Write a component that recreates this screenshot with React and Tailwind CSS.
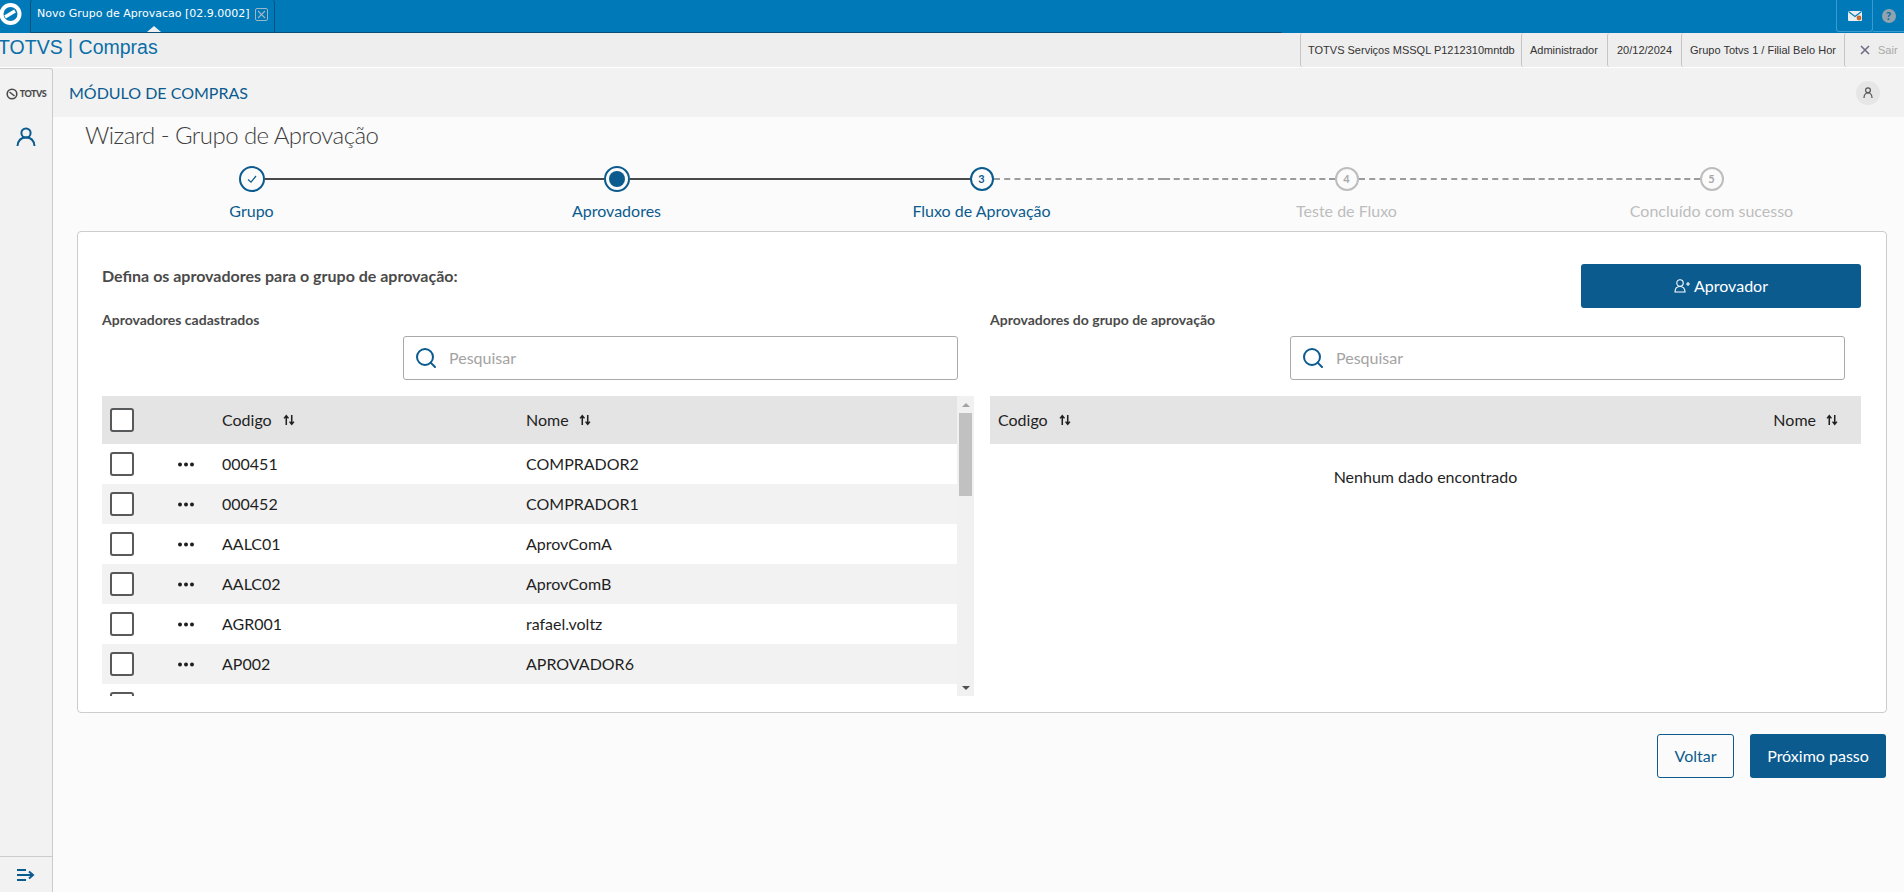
import { Search } from "lucide-react";

const ROWS = [
  ["000451", "COMPRADOR2"],
  ["000452", "COMPRADOR1"],
  ["AALC01", "AprovComA"],
  ["AALC02", "AprovComB"],
  ["AGR001", "rafael.voltz"],
  ["AP002", "APROVADOR6"],
  ["", ""],
];

const STEPS = [
  { label: "Grupo", state: "done", left: "none", right: "solid" },
  { label: "Aprovadores", state: "active", left: "solid", right: "solid" },
  { label: "Fluxo de Aprovação", state: "current", num: 3, left: "solid", right: "dashed" },
  { label: "Teste de Fluxo", state: "todo", num: 4, left: "dashed", right: "dashed" },
  { label: "Concluído com sucesso", state: "todo", num: 5, left: "dashed", right: "none" },
];

function Connector({ kind }) {
  if (kind === "none") return <div className="flex-1" />;
  if (kind === "solid") return <div className="flex-1 h-[2px] bg-[#4a4a4a]" />;
  return <div className="flex-1 border-t-2 border-dashed border-[#9b9b9b]" />;
}

function StepCircle({ step }) {
  if (step.state === "done") {
    return (
      <div className="w-[26px] h-[26px] rounded-full border-2 border-[#0b5b8f] flex items-center justify-center">
        <svg width="12" height="12" viewBox="0 0 12 12" fill="none" stroke="#0b5b8f" strokeWidth="1.2">
          <path d="M2 6.5 L5 9.2 L10 3" />
        </svg>
      </div>
    );
  }
  if (step.state === "active") {
    return (
      <div className="w-[26px] h-[26px] rounded-full border-2 border-[#0b5b8f] flex items-center justify-center">
        <div className="w-[16px] h-[16px] rounded-full bg-[#0b5b8f]" />
      </div>
    );
  }
  const tone = step.state === "current" ? "border-[#0b5b8f] text-[#0b5b8f]" : "border-[#bdbdbd] text-[#a8a8a8]";
  return (
    <div className={`w-[24px] h-[24px] rounded-full border-2 flex items-center justify-center text-[11px] font-bold ${tone}`}>
      {step.num}
    </div>
  );
}

function Stepper() {
  return (
    <div className="flex ml-[16px] mt-[13px] w-[1825px]">
      {STEPS.map((s) => (
        <div key={s.label} className="w-[365px] flex flex-col items-center">
          <div className="w-full h-[26px] flex items-center">
            <Connector kind={s.left} />
            <StepCircle step={s} />
            <Connector kind={s.right} />
          </div>
          <div className={`mt-[7px] mb-[1px] text-base leading-6 ${s.state === "todo" ? "text-[#bdbdbd]" : "text-[#0b5b8f]"}`}>
            {s.label}
          </div>
        </div>
      ))}
    </div>
  );
}

function SortIcon() {
  return (
    <svg width="12" height="12" viewBox="0 0 11 11" fill="none" stroke="#1f1f1f" strokeWidth="1.4">
      <path d="M3 10 V2 M1 4 L3 1.5 L5 4" />
      <path d="M8 1 V9 M6 7 L8 9.5 L10 7" />
    </svg>
  );
}

function Checkbox() {
  return <div className="w-[24px] h-[24px] shrink-0 rounded-[3px] border-2 border-[#58595b] bg-white" />;
}

function Dots() {
  return (
    <svg width="16" height="5" viewBox="0 0 16 5" fill="#1f1f1f">
      <circle cx="2" cy="2.5" r="2" />
      <circle cx="8" cy="2.5" r="2" />
      <circle cx="14" cy="2.5" r="2" />
    </svg>
  );
}

function SearchBox() {
  return (
    <div className="mt-[4px] mr-[16px] ml-auto w-[555px] h-[44px] flex items-center border border-[#a9a9a9] rounded-[3px] bg-white pl-[10px]">
      <Search className="w-[24px] h-[24px] text-[#0b5b8f]" strokeWidth={2} />
      <span className="ml-[11px] text-base text-[#a3a3a3]">Pesquisar</span>
    </div>
  );
}

function Scrollbar() {
  return (
    <div className="w-[17px] shrink-0 flex flex-col items-center bg-[#f1f1f1]">
      <div className="h-[17px] flex items-center justify-center">
        <div className="w-0 h-0 border-x-[4px] border-x-transparent border-b-[4px] border-b-[#a3a3a3]" />
      </div>
      <div className="w-[13px] h-[83px] bg-[#c1c1c1]" />
      <div className="flex-1" />
      <div className="h-[17px] flex items-center justify-center">
        <div className="w-0 h-0 border-x-[4px] border-x-transparent border-t-[4px] border-t-[#505050]" />
      </div>
    </div>
  );
}

function LeftTable() {
  return (
    <div className="mt-[16px] flex h-[300px]">
      <div className="w-[855px] overflow-hidden text-base text-[#1f1f1f]">
        <div className="h-[48px] bg-[#e4e4e4] grid grid-cols-[120px_304px_1fr] items-center">
          <div className="pl-[8px]">
            <Checkbox />
          </div>
          <div className="flex items-center gap-[11px]">
            Codigo <SortIcon />
          </div>
          <div className="flex items-center gap-[10px]">
            Nome <SortIcon />
          </div>
        </div>
        {ROWS.map((r, i) => (
          <div
            key={i}
            className={`h-[40px] grid grid-cols-[76px_44px_304px_1fr] items-center ${i % 2 ? "bg-[#f2f2f2]" : "bg-white"}`}
          >
            <div className="pl-[8px]">
              <Checkbox />
            </div>
            <div className="flex">{r[0] && <Dots />}</div>
            <div>{r[0]}</div>
            <div>{r[1]}</div>
          </div>
        ))}
      </div>
      <Scrollbar />
    </div>
  );
}

function RightTable() {
  return (
    <div className="mt-[16px] text-base text-[#1f1f1f]">
      <div className="h-[48px] bg-[#e4e4e4] flex items-center justify-between px-[8px] pr-[23px]">
        <div className="flex items-center gap-[11px]">
          Codigo <SortIcon />
        </div>
        <div className="flex items-center gap-[10px]">
          Nome <SortIcon />
        </div>
      </div>
      <div className="text-center mt-[21px] leading-6">Nenhum dado encontrado</div>
    </div>
  );
}

export default function App() {
  return (
    <div className="w-[1904px] h-[892px] overflow-hidden flex flex-col bg-[#fbfbfb] font-['Lato',sans-serif]">
      {/* top blue bar */}
      <div className="h-[33px] shrink-0 flex bg-[#0079b8]">
        <div className="w-[30px] shrink-0 flex items-start">
          <svg width="24" height="28" viewBox="0 0 24 28">
            <circle cx="10.5" cy="14" r="9" fill="none" stroke="#fff" strokeWidth="4" />
            <path d="M5 17 L15 11" stroke="#fff" strokeWidth="3.4" />
          </svg>
        </div>
        <div className="relative w-[245px] shrink-0 flex items-center pl-[6px] pb-[3px] border-x border-b border-[#0a4f78] rounded-t-[3px] font-['DejaVu_Sans',sans-serif] text-[11px] text-white">
          Novo Grupo de Aprovacao [02.9.0002]
          <span className="ml-[5px] w-[13px] h-[13px] flex items-center justify-center border border-[#9fb6c4] rounded-[2px]">
            <svg width="9" height="9" viewBox="0 0 9 9" stroke="#9fb6c4" strokeWidth="1.1">
              <path d="M1 1 L8 8 M8 1 L1 8" />
            </svg>
          </span>
          <span className="absolute bottom-0 left-[116px] w-0 h-0 border-x-[7px] border-x-transparent border-b-[6px] border-b-[#efefef]" />
        </div>
        <div className="w-[1007px] border-b border-[#0a4f78]" />
        <div className="flex-1" />
        <div className="w-[37px] mb-[1px] flex items-center justify-center border-x border-b border-[#3b9bd0] rounded-b-[3px]">
          <svg width="14" height="10" viewBox="0 0 14 10">
            <rect width="14" height="10" rx="1" fill="#e8eef2" />
            <path d="M0.5 0.5 L7 5.5 L13.5 0.5" fill="none" stroke="#0079b8" strokeWidth="1.1" />
            <circle cx="11" cy="7" r="2.4" fill="#c9692a" />
          </svg>
        </div>
        <div className="w-[31px] mb-[1px] flex items-center justify-center border-b border-[#3b9bd0]">
          <span className="w-[14px] h-[14px] rounded-full bg-[#93a3ad] flex items-center justify-center text-[#0a6ea6] text-[11px] font-black leading-none">
            ?
          </span>
        </div>
      </div>

      {/* info bar */}
      <div className="h-[34px] shrink-0 flex items-center bg-[#eeeeee] font-['Liberation_Sans',sans-serif] text-[11px] text-[#333333]">
        <div className="w-[1300px] text-[19.5px] leading-none text-[#0b6ea8] ml-[-2px] pb-[4px]">TOTVS | Compras</div>
        <div className="w-[221px] h-full flex items-center pl-[7px] border-l border-[#c4c4c4] rounded-l-[3px] ml-[2px]">
          TOTVS Serviços MSSQL P1212310mntdb
        </div>
        <div className="w-[86px] h-full flex items-center pl-[8px] border-l border-[#c4c4c4] rounded-l-[3px]">
          Administrador
        </div>
        <div className="w-[74px] h-full flex items-center pl-[9px] border-l border-[#c4c4c4] rounded-l-[3px]">
          20/12/2024
        </div>
        <div className="w-[163px] h-full flex items-center pl-[8px] border-l border-[#c4c4c4] rounded-l-[3px] overflow-hidden whitespace-nowrap">
          Grupo Totvs 1 / Filial Belo Hor
        </div>
        <div className="flex-1 h-full flex items-center pl-[15px] border-l border-[#c4c4c4] rounded-l-[3px] text-[#a8a8a8]">
          <svg width="10" height="10" viewBox="0 0 10 10" stroke="#6d6d85" strokeWidth="1.6">
            <path d="M1 1 L9 9 M9 1 L1 9" />
          </svg>
          <span className="ml-[8px]">Sair</span>
        </div>
      </div>
      <div className="h-[1px] shrink-0 bg-white" />

      <div className="flex-1 flex min-h-0">
        {/* sidebar */}
        <div className="w-[53px] shrink-0 flex flex-col bg-[#f2f2f2] border-r border-t border-[#cccccc] rounded-tr-[3px]">
          <div className="h-[48px] flex items-center justify-center gap-[2px] pt-[1px]">
            <svg width="12" height="12" viewBox="0 0 12 12">
              <circle cx="6" cy="6" r="4.8" fill="none" stroke="#4a4a4a" strokeWidth="1.6" />
              <path d="M3.5 4 L8.5 8" stroke="#4a4a4a" strokeWidth="1.6" />
            </svg>
            <span className="text-[9px] font-black text-[#4a4a4a] tracking-tighter leading-none">TOTVS</span>
          </div>
          <div className="h-[40px] flex items-center justify-center">
            <svg width="20" height="20" viewBox="0 0 20 20" fill="none" stroke="#0b5b8f" strokeWidth="2">
              <circle cx="10" cy="6" r="4.6" />
              <path d="M1.5 19 C2 14 5 10.6 10 10.6 C15 10.6 18 14 18.5 19" />
            </svg>
          </div>
          <div className="flex-1" />
          <div className="h-[36px] border-t border-[#cccccc] flex items-center justify-center">
            <svg width="18" height="12" viewBox="0 0 18 12" fill="none" stroke="#0b5b8f" strokeWidth="2">
              <path d="M0 1 H9 M0 6 H15 M0 11 H9" />
              <path d="M12 2.5 L16 6 L12 9.5" />
            </svg>
          </div>
        </div>

        {/* main */}
        <div className="flex-1 min-w-0 flex flex-col">
          <div className="h-[49px] shrink-0 flex items-center justify-between bg-[#f2f2f2] pl-[16px] pr-[24px]">
            <span className="text-base text-[#0b5b8f]">MÓDULO DE COMPRAS</span>
            <span className="w-[24px] h-[24px] rounded-full bg-[#e6e6e6] flex items-center justify-center">
              <svg width="10" height="12" viewBox="0 0 10 12" fill="none" stroke="#555555" strokeWidth="1.2">
                <circle cx="5" cy="3.2" r="2.4" />
                <path d="M1 11 C1 7.5 3 6 5 6 C7 6 9 7.5 9 11" />
              </svg>
            </span>
          </div>

          <div className="h-[36px] shrink-0 pl-[32px] flex items-center text-[24px] font-light tracking-[-0.55px] text-[#3f3f3f] leading-none">
            Wizard - Grupo de Aprovação
          </div>

          <Stepper />

          {/* card */}
          <div className="ml-[24px] w-[1810px] h-[482px] mt-[7px] border border-[#cccccc] rounded-[4px] bg-white pt-[32px] pl-[24px] pr-[24px]">
            <div className="grid grid-cols-[872px_871px] gap-x-[16px]">
              <div>
                <div className="h-[44px] text-base font-bold text-[#4a4a4a] leading-6">
                  Defina os aprovadores para o grupo de aprovação:
                </div>
                <div className="h-[24px] text-sm font-bold text-[#4a4a4a] leading-6">Aprovadores cadastrados</div>
                <SearchBox />
                <LeftTable />
              </div>
              <div>
                <div className="h-[44px] flex justify-end">
                  <button className="w-[280px] h-[44px] rounded-[3px] bg-[#0b5b8f] text-white text-base flex items-center justify-center gap-[4px]">
                    <svg width="16" height="14" viewBox="0 0 16 14" fill="none" stroke="#ffffff" strokeWidth="1.1">
                      <circle cx="6" cy="4" r="3.2" />
                      <path d="M1 13 C1 9.5 3 7.5 6 7.5 C9 7.5 11 9.5 11 13 Z" />
                      <path d="M12 5 H16 M14 3 V7" />
                    </svg>
                    Aprovador
                  </button>
                </div>
                <div className="h-[24px] text-sm font-bold text-[#4a4a4a] leading-6">Aprovadores do grupo de aprovação</div>
                <SearchBox />
                <RightTable />
              </div>
            </div>
          </div>

          {/* footer buttons */}
          <div className="mt-[21px] ml-[1604px] flex gap-[16px]">
            <button className="w-[77px] h-[44px] rounded-[3px] border border-[#0b5b8f] text-[#0b5b8f] text-base">Voltar</button>
            <button className="w-[136px] h-[44px] rounded-[3px] bg-[#0b5b8f] text-white text-base">Próximo passo</button>
          </div>
        </div>
      </div>
    </div>
  );
}
